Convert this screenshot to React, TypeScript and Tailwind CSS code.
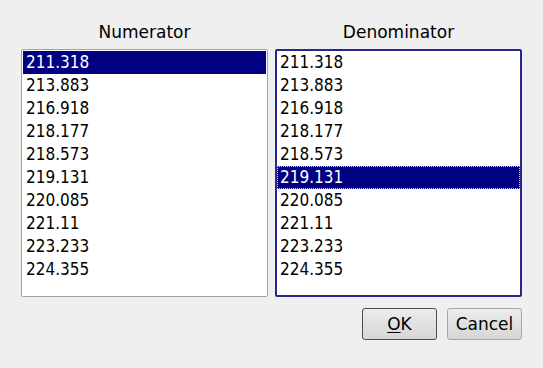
const values = [
  '211.318',
  '213.883',
  '216.918',
  '218.177',
  '218.573',
  '219.131',
  '220.085',
  '221.11',
  '223.233',
  '224.355',
];

function ListBox({ selected, focused }: { selected: number; focused?: boolean }) {
  return (
    <div
      className={`h-[248px] w-[247px] overflow-hidden rounded-[2px] bg-white ${
        focused ? 'border-2 border-[#26268c] p-0' : 'border border-[#a3a3a3] p-px'
      }`}
    >
      {values.map((v, i) => (
        <div
          key={v}
          className={`h-[23px] pl-[3px] font-['DejaVu_Sans_Condensed','DejaVu_Sans',sans-serif] text-[17px] leading-[22px] font-stretch-condensed ${
            i === selected ? 'bg-[#000080] text-white' : 'text-black'
          } ${i === selected && focused ? 'outline-1 -outline-offset-1 outline-dotted outline-[#e8e070]' : ''}`}
        >
          {v}
        </div>
      ))}
    </div>
  );
}

export default function App() {
  return (
    <div className="h-[368px] w-[543px] bg-[#efefef] pl-[21px] pr-[21px] pt-[22px] font-['DejaVu_Sans',sans-serif] text-black">
      <div className="flex gap-[7px]">
        <div className="flex flex-col">
          <div className="mb-[7px] h-[20px] text-center text-[17px] leading-[20px]">Numerator</div>
          <ListBox selected={0} />
        </div>
        <div className="flex flex-col">
          <div className="mb-[7px] h-[20px] text-center text-[17px] leading-[20px]">Denominator</div>
          <ListBox selected={5} focused />
        </div>
      </div>
      <div className="mt-[11px] flex justify-end gap-[10px]">
        <button className="h-[32px] w-[75px] rounded-[3px] border border-[#4c4c4c] bg-gradient-to-b from-[#ececec] to-[#d6d6d6] text-[17px] leading-[30px]">
          <span className="underline underline-offset-2">O</span>K
        </button>
        <button className="h-[32px] w-[75px] rounded-[3px] border border-[#a6a6a6] bg-gradient-to-b from-[#ececec] to-[#d6d6d6] text-[17px] leading-[30px]">
          Cancel
        </button>
      </div>
    </div>
  );
}
